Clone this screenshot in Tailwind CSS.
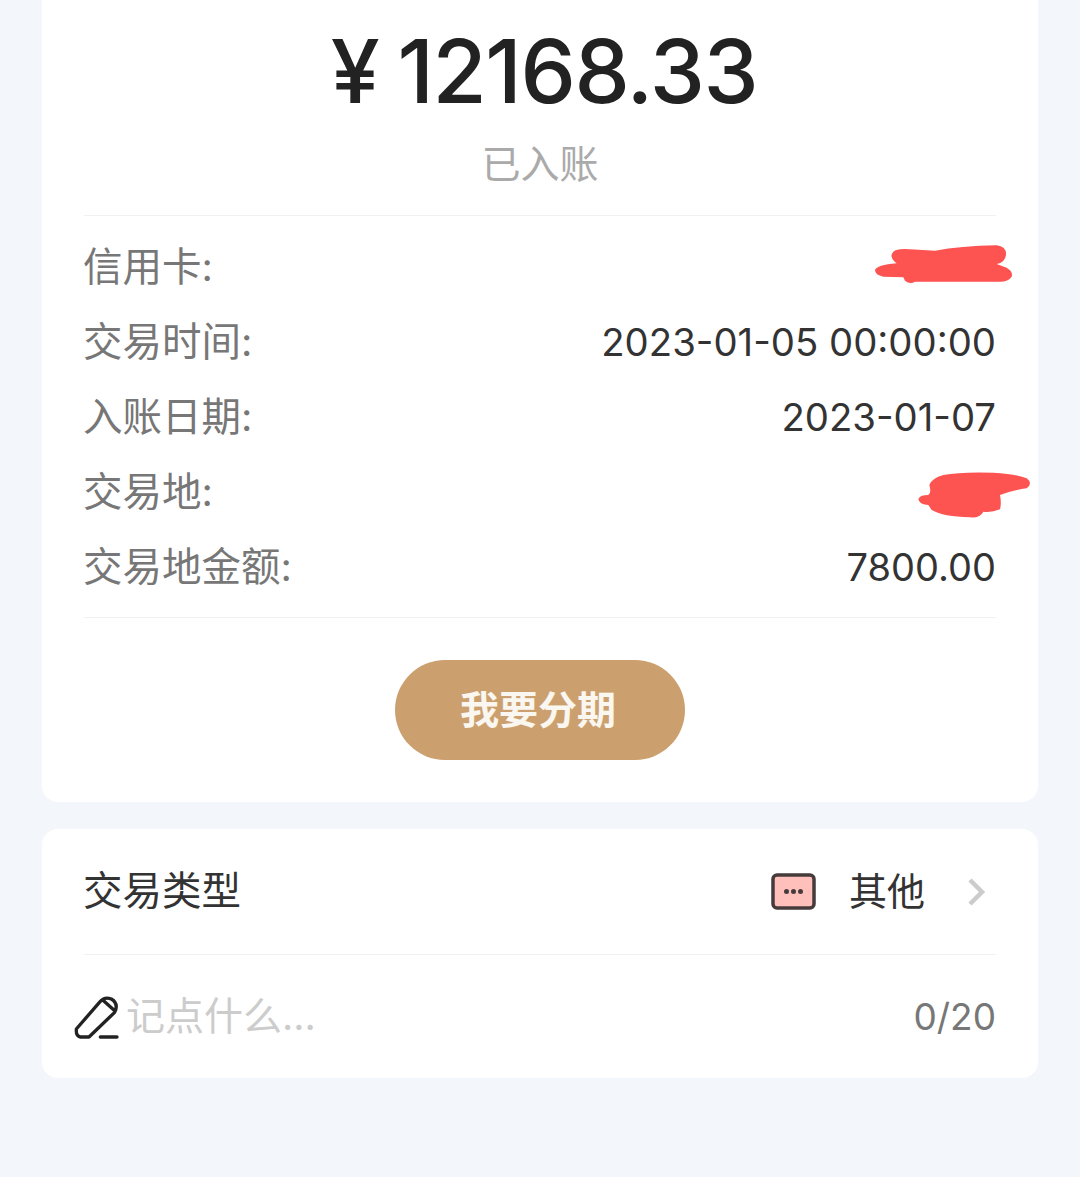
<!doctype html>
<html><head><meta charset="utf-8"><script src="https://cdn.jsdelivr.net/npm/@tailwindcss/browser@4"></script></head>
<body class="m-0">
<div class="w-[1080px] h-[1177px] overflow-hidden bg-[#f3f6fa] px-[42px] font-['Inter','Noto_Sans_CJK_SC',sans-serif]">
  <div class="h-[802px] bg-white rounded-b-[16px] px-[42px] flex flex-col">
    <div class="h-[216px] border-b border-[#f0f0f0] flex flex-col items-center">
      <div class="mt-[21px] pl-[8px] h-[100px] leading-[100px] text-[88px] font-medium text-[#222] tracking-[-1.4px] whitespace-nowrap flex"><span class="mr-[19px]">¥</span><span>12168.33</span></div>
      <div class="mt-[23px] h-[40px] leading-[40px] text-[39px] text-[#aaa]">已入账</div>
    </div>
    <div class="h-[402px] border-b border-[#f0f0f0] pt-[14px] flex flex-col text-[39.5px] text-[#777]">
      <div class="relative h-[75px] flex items-center justify-between"><span class="-ml-px">信用卡:</span>
        <svg class="absolute right-[-54px] top-0" width="190" height="70" viewBox="0 0 570 210"><path d="M45 120 Q50 105 110 100 Q85 80 100 65 Q110 55 150 58 L225 62 Q300 48 410 46 Q440 50 438 75 Q435 98 410 102 L440 113 Q460 125 455 140 Q445 155 420 155 L165 155 Q150 165 135 152 L130 142 L70 140 Q45 135 45 120Z" fill="#fd5351"/></svg></div>
      <div class="h-[75px] flex items-center justify-between"><span class="-ml-px">交易时间:</span><span class="text-[#333] text-[38.3px]">2023-01-05 00:00:00</span></div>
      <div class="h-[75px] flex items-center justify-between"><span class="-ml-px">入账日期:</span><span class="text-[#333] text-[38.3px]">2023-01-07</span></div>
      <div class="relative h-[75px] flex items-center justify-between"><span class="-ml-px">交易地:</span>
        <svg class="absolute right-[-54px] top-[5px]" width="150" height="70" viewBox="0 0 450 210"><path d="M55 118 Q58 105 85 105 Q95 100 88 75 Q95 55 130 45 Q180 35 280 38 Q350 42 380 55 Q400 70 380 85 Q340 90 300 105 Q305 130 300 148 Q275 158 250 155 Q240 175 210 172 Q130 170 95 150 L85 135 Q60 135 55 118Z" fill="#fd5351"/></svg></div>
      <div class="h-[75px] flex items-center justify-between"><span class="-ml-px">交易地金额:</span><span class="text-[#333] text-[38px]">7800.00</span></div>
    </div>
    <div class="flex justify-center pt-[42px]"><div class="w-[290px] h-[100px] rounded-full bg-[#cca06e] text-white/90 text-[39px] font-bold pr-[4px] flex items-center justify-center">我要分期</div></div>
  </div>
  <div class="mt-[27px] h-[249px] bg-white rounded-[16px] px-[42px] flex flex-col">
    <div class="h-[126px] border-b border-[#f0f0f0] flex items-center text-[39.5px] text-[#333]">
      <span class="flex-1 -ml-px">交易类型</span>
      <svg width="46" height="37" viewBox="0 0 46 37"><rect x="2" y="2" width="41" height="33" rx="4" fill="#ffc0bc" stroke="#463b3b" stroke-width="3.5"/><circle cx="15.500" cy="18.500" r="2.500" fill="#463b3b"/><circle cx="22.500" cy="18.500" r="2.500" fill="#463b3b"/><circle cx="29.500" cy="18.500" r="2.500" fill="#463b3b"/></svg>
      <span class="ml-[32px] text-[38px]">其他</span>
      <svg class="ml-[42px] mr-[10px]" width="19" height="28" viewBox="0 0 19 28"><path d="M3 2 L15 14 L3 26" fill="none" stroke="#ccc" stroke-width="4.500"/></svg>
    </div>
    <div class="flex-1 flex items-center relative text-[39px]">
      <svg class="absolute left-[-10.670px] top-[38.330px]" width="46.670" height="48.330" viewBox="40 40 140 145"><path d="M50 148 L122 65 Q135 50 155 58 Q178 72 165 98 L88 172 L62 172 Q50 170 50 155 Z M130 62 L166 94 M122 172 H172" fill="none" stroke="#222" stroke-width="10" stroke-linecap="round" stroke-linejoin="round"/></svg>
      <span class="ml-[42px] flex-1 text-[#ccc]">记点什么...</span>
      <span class="text-[#777] text-[37px]">0/20</span>
    </div>
  </div>
</div>
</body></html>
